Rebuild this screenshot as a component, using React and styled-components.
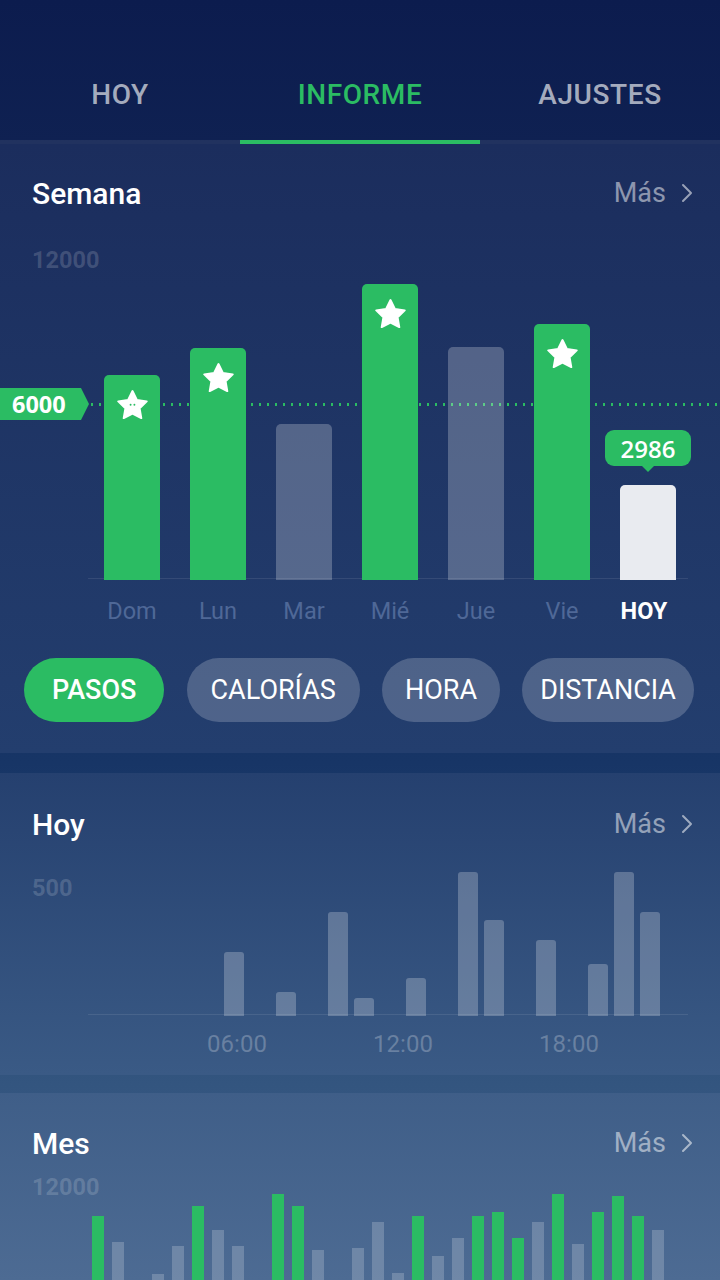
import React from "react";
import styled, { createGlobalStyle } from "styled-components";

const GREEN = "#2bbc63";

const GlobalStyle = createGlobalStyle`
  html, body { margin: 0; padding: 0; background: #0c1c4e; }
  body { font-family: Roboto, "Noto Sans", "Liberation Sans", sans-serif; }
  * { box-sizing: border-box; }
`;

const Page = styled.div`
  width: 720px;
  height: 1280px;
  overflow: hidden;
  display: flex;
  flex-direction: column;
  background: linear-gradient(
    to bottom,
    #0c1c4e 0px,
    #173566 763px,
    #33557f 1084px,
    #3f5f8a 1280px
  );
`;

const Header = styled.nav`
  display: grid;
  grid-template-columns: repeat(3, 1fr);
  background: linear-gradient(#0c1c4e, #0f2152);
`;

const Tab = styled.div`
  height: 144px;
  padding-top: 77px;
  text-align: center;
  font-size: 28px;
  line-height: 36px;
  font-weight: 500;
  letter-spacing: 0.6px;
  color: ${(p) => (p.$active ? GREEN : "rgba(255,255,255,0.64)")};
  border-bottom: 4px solid
    ${(p) => (p.$active ? GREEN : "rgba(255,255,255,0.08)")};
`;

const Section = styled.section`
  margin-top: ${(p) => p.$gap || 0}px;
  background: ${(p) => p.$bg};
  padding-bottom: ${(p) => p.$pb || 0}px;
  flex-shrink: 0;
`;

const SectionHead = styled.div`
  display: flex;
  align-items: center;
  justify-content: space-between;
  height: 36px;
  margin-top: ${(p) => p.$mt}px;
  padding: 0 27px 0 32px;
`;

const Title = styled.h2`
  margin: 0;
  font-size: 30px;
  font-weight: 500;
  color: #ffffff;
`;

const More = styled.div`
  display: flex;
  align-items: center;
  gap: 15px;
  font-size: 27px;
  color: rgba(255, 255, 255, 0.5);
`;

const Chevron = () => (
  <svg width="12" height="20" viewBox="0 0 12 20" fill="none">
    <path
      d="M2 2l8 8-8 8"
      stroke="rgba(255,255,255,0.55)"
      strokeWidth="2"
      strokeLinecap="round"
      strokeLinejoin="round"
    />
  </svg>
);

const ChartGrid = styled.div`
  display: grid;
  grid-template-columns: 1fr;
  grid-template-rows: ${(p) => p.$h}px;
  margin-top: ${(p) => p.$mt}px;
  & > * {
    grid-area: 1 / 1;
  }
`;

const AxisLabel = styled.div`
  align-self: start;
  justify-self: start;
  margin: ${(p) => p.$top || 0}px 0 0 32px;
  font-size: 23.5px;
  line-height: 26px;
  font-weight: 700;
  color: rgba(255, 255, 255, 0.17);
`;

const GoalLine = styled.div`
  align-self: start;
  margin-top: 141px;
  display: flex;
  align-items: center;
  height: 32px;
`;

const GoalFlag = styled.div`
  width: 89px;
  height: 32px;
  padding-left: 12px;
  display: flex;
  align-items: center;
  background: ${GREEN};
  clip-path: polygon(0 0, 81px 0, 89px 50%, 81px 100%, 0 100%);
  font-family: "Open Sans", "Noto Sans", sans-serif;
  font-weight: 700;
  font-size: 23.5px;
  color: #fff;
`;

const Dots = styled.div`
  flex: 1;
  height: 3px;
  margin-left: 2px;
  background: repeating-linear-gradient(
    to right,
    ${GREEN} 0 2.5px,
    transparent 2.5px 8px
  );
`;

const Baseline = styled.div`
  align-self: end;
  justify-self: start;
  margin: 0 0 ${(p) => p.$mb || 0}px 88px;
  width: 600px;
  height: 1px;
  background: rgba(255, 255, 255, 0.09);
`;

const WeekBars = styled.div`
  align-self: end;
  display: flex;
  align-items: flex-end;
  gap: 30px;
  margin-left: 104px;
`;

const WeekBar = styled.div`
  position: relative;
  width: 56px;
  height: ${(p) => p.$h}px;
  border-radius: 5px 5px 0 0;
  background: ${(p) =>
    p.$kind === "goal"
      ? GREEN
      : p.$kind === "today"
      ? "#e9ebf0"
      : "rgba(255,255,255,0.24)"};
  display: flex;
  justify-content: center;
  padding-top: 14px;
`;

const Tooltip = styled.div`
  position: absolute;
  bottom: calc(100% + 19px);
  left: 50%;
  transform: translateX(-50%);
  width: 86px;
  height: 36px;
  border-radius: 9px;
  background: ${GREEN};
  display: flex;
  align-items: center;
  justify-content: center;
  font-family: "Open Sans", "Noto Sans", sans-serif;
  font-weight: 600;
  font-size: 24px;
  color: #fff;
  &::after {
    content: "";
    position: absolute;
    top: 100%;
    left: 50%;
    transform: translateX(-50%);
    border-left: 6px solid transparent;
    border-right: 6px solid transparent;
    border-top: 6px solid ${GREEN};
  }
`;

const Star = ({ face }) => (
  <svg width="33" height="30" viewBox="0 0 24 22">
    <polygon
      points="12,1.5 15.23,8.05 22.46,9.1 17.23,14.2 18.47,21.4 12,18 5.53,21.4 6.77,14.2 1.54,9.1 8.77,8.05"
      fill="#fff"
      stroke="#fff"
      strokeWidth="1.4"
      strokeLinejoin="round"
    />
    {face && (
      <g fill={GREEN}>
        <circle cx="10.6" cy="11.6" r="0.7" />
        <circle cx="13.4" cy="11.6" r="0.7" />
      </g>
    )}
  </svg>
);

const DayRow = styled.div`
  display: flex;
  gap: 30px;
  margin: 18px 0 0 104px;
`;

const Day = styled.div`
  width: 56px;
  text-align: center;
  font-size: 23.5px;
  line-height: 26px;
  font-weight: ${(p) => (p.$today ? 700 : 400)};
  color: ${(p) => (p.$today ? "#ffffff" : "#4f6897")};
  white-space: nowrap;
  display: flex;
  justify-content: center;
  margin-left: ${(p) => (p.$today ? -4 : 0)}px;
`;

const Pills = styled.div`
  display: flex;
  justify-content: space-between;
  margin-top: 34px;
  padding: 0 26px 0 24px;
`;

const Pill = styled.div`
  height: 64px;
  padding: 0 ${(p) => p.$px}px;
  border-radius: 32px;
  display: flex;
  align-items: center;
  font-size: 27px;
  font-weight: ${(p) => (p.$active ? 500 : 400)};
  color: #fff;
  background: ${(p) => (p.$active ? GREEN : "rgba(255,255,255,0.2)")};
`;

const HourBars = styled.div`
  align-self: end;
  display: flex;
  align-items: flex-end;
  margin-left: 94px;
`;

const HourSlot = styled.div`
  width: 26px;
  display: flex;
`;

const HourBar = styled.div`
  width: 20px;
  height: ${(p) => p.$h}px;
  border-radius: 3px 3px 0 0;
  background: rgba(255, 255, 255, 0.24);
`;

const TimeRow = styled.div`
  display: grid;
  grid-template-columns: repeat(3, 166px);
  margin: 15px 0 0 154px;
`;

const Time = styled.div`
  text-align: center;
  font-size: 24px;
  line-height: 26px;
  color: rgba(255, 255, 255, 0.25);
`;

const MonthBars = styled.div`
  align-self: end;
  display: flex;
  align-items: flex-end;
  margin-left: 92px;
`;

const MonthSlot = styled.div`
  width: 20px;
  display: flex;
`;

const MonthBar = styled.div`
  width: 12px;
  height: ${(p) => p.$h}px;
  background: ${(p) => (p.$goal ? GREEN : "rgba(255,255,255,0.2)")};
`;

const week = [
  { d: "Dom", h: 205, kind: "goal", face: true },
  { d: "Lun", h: 232, kind: "goal" },
  { d: "Mar", h: 156 },
  { d: "Mié", h: 296, kind: "goal" },
  { d: "Jue", h: 233 },
  { d: "Vie", h: 256, kind: "goal" },
  { d: "HOY", h: 95, kind: "today", value: 2986 },
];

const hours = {
  5: 64, 7: 24, 9: 104, 10: 18, 12: 38, 14: 144, 15: 96, 17: 76, 19: 52, 20: 144, 21: 104,
};

const MONTH_BASE = 1420;
const month = [
  [1216, 1], [1242, 0], [null, 0], [1274, 0], [1246, 0], [1206, 1], [1230, 0],
  [1246, 0], [null, 0], [1194, 1], [1206, 1], [1250, 0], [null, 0], [1248, 0],
  [1222, 0], [1273, 0], [1216, 1], [1256, 0], [1238, 0], [1216, 1], [1212, 1],
  [1238, 1], [1222, 0], [1194, 1], [1244, 0], [1212, 1], [1196, 1], [1216, 1],
  [1230, 0],
];

const pills = [
  { t: "PASOS", active: true, px: 28 },
  { t: "CALORÍAS", px: 24 },
  { t: "HORA", px: 23 },
  { t: "DISTANCIA", px: 18 },
];

const SectionTitle = ({ title, mt }) => (
  <SectionHead $mt={mt}>
    <Title>{title}</Title>
    <More>
      Más
      <Chevron />
    </More>
  </SectionHead>
);

export default function App() {
  return (
    <>
      <GlobalStyle />
      <Page>
        <Header>
          <Tab>HOY</Tab>
          <Tab $active>INFORME</Tab>
          <Tab>AJUSTES</Tab>
        </Header>

        <Section $bg="linear-gradient(#1b2d5d, #233e6e)" $pb={31}>
          <SectionTitle title="Semana" mt={31} />
          <ChartGrid $h={333} $mt={36}>
            <AxisLabel>12000</AxisLabel>
            <GoalLine>
              <GoalFlag>6000</GoalFlag>
              <Dots />
            </GoalLine>
            <Baseline $mb={1} />
            <WeekBars>
              {week.map((b) => (
                <WeekBar key={b.d} $h={b.h} $kind={b.kind}>
                  {b.kind === "goal" && <Star face={b.face} />}
                  {b.value && <Tooltip>{b.value}</Tooltip>}
                </WeekBar>
              ))}
            </WeekBars>
          </ChartGrid>
          <DayRow>
            {week.map((b) => (
              <Day key={b.d} $today={b.kind === "today"}>
                {b.d}
              </Day>
            ))}
          </DayRow>
          <Pills>
            {pills.map((p) => (
              <Pill key={p.t} $active={p.active} $px={p.px}>
                {p.t}
              </Pill>
            ))}
          </Pills>
        </Section>

        <Section $gap={20} $bg="linear-gradient(#25406f, #3a5a85)" $pb={18}>
          <SectionTitle title="Hoy" mt={33} />
          <ChartGrid $h={150} $mt={24}>
            <AxisLabel $top={9}>500</AxisLabel>
            <Baseline $mb={1} />
            <HourBars>
              {Array.from({ length: 23 }, (_, i) => (
                <HourSlot key={i}>
                  {hours[i] ? <HourBar $h={hours[i]} /> : null}
                </HourSlot>
              ))}
            </HourBars>
          </ChartGrid>
          <TimeRow>
            <Time>06:00</Time>
            <Time>12:00</Time>
            <Time>18:00</Time>
          </TimeRow>
        </Section>

        <Section $gap={18} $bg="linear-gradient(#3f5e88 0px, #4d6b93 187px, #4d6b93 100%)">
          <SectionTitle title="Mes" mt={32} />
          <ChartGrid $h={MONTH_BASE - 1174} $mt={13}>
            <AxisLabel>12000</AxisLabel>
            <MonthBars>
              {month.map(([top, g], i) => (
                <MonthSlot key={i}>
                  {top ? <MonthBar $h={MONTH_BASE - top} $goal={!!g} /> : null}
                </MonthSlot>
              ))}
            </MonthBars>
          </ChartGrid>
        </Section>
      </Page>
    </>
  );
}
